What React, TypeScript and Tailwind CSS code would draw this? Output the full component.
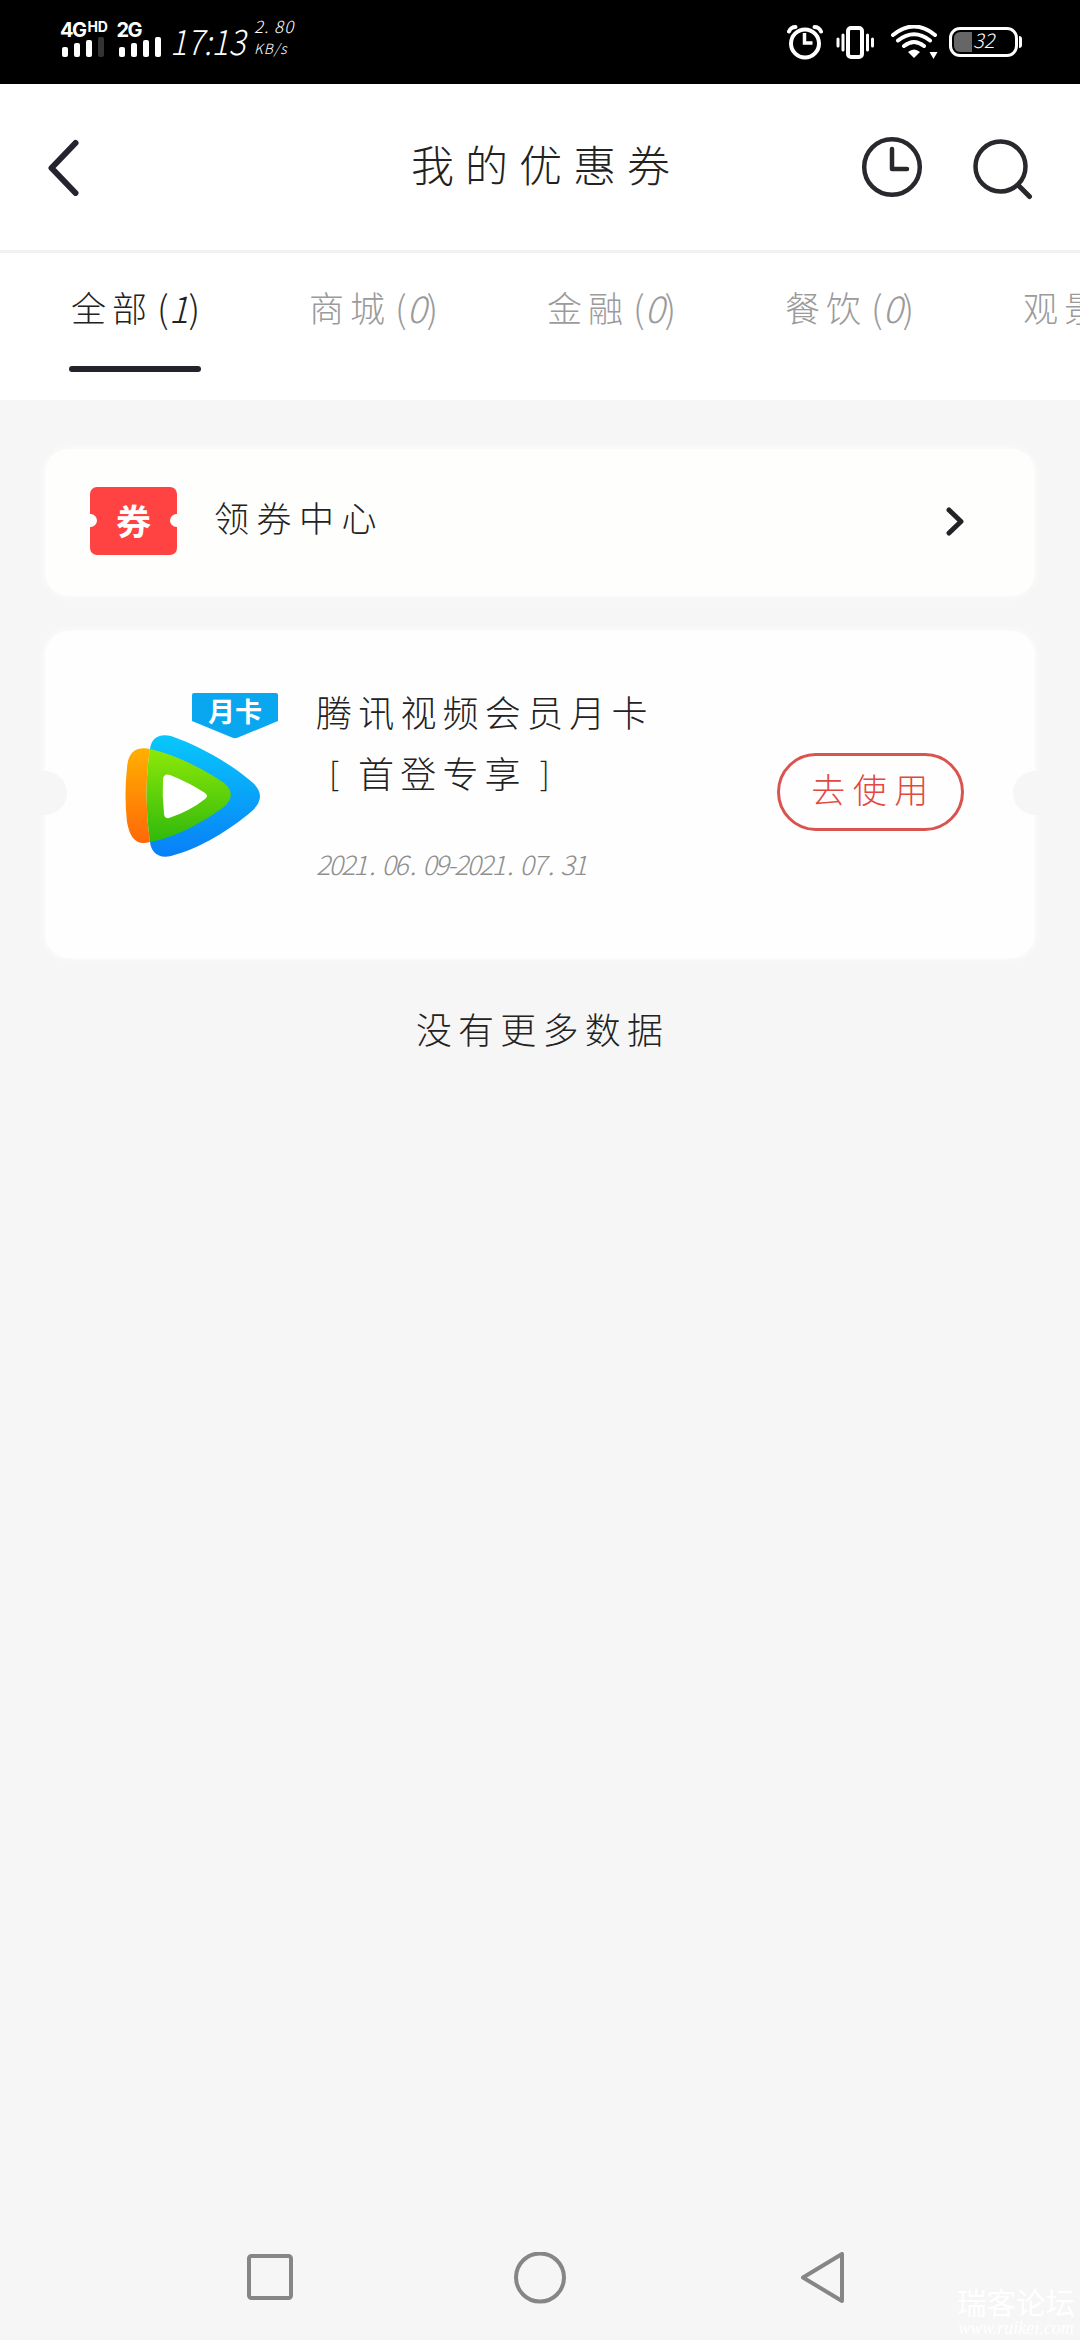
import { Fragment, type ReactNode } from "react";
import clsx from "clsx";

const tabs = [
  { name: "全部", count: 1 },
  { name: "商城", count: 0 },
  { name: "金融", count: 0 },
  { name: "餐饮", count: 0 },
  { name: "观景", count: 0 },
];

function Signal({ label, sup, dim }: { label: string; sup?: string; dim?: boolean }): ReactNode {
  return (
    <div className="w-[56.500px] flex flex-col">
      <div className="h-[20px] -ml-[2px] flex items-start font-['Inter'] font-bold">
        <span className="mt-px text-[20px] leading-[20px] tracking-[-1.5px]">{label}</span>
        {sup && <span className="ml-[2px] text-[14px] leading-[16px] tracking-[-0.3px]">{sup}</span>}
      </div>
      <div className="mt-[-2px] h-[20px] flex items-end gap-[6px]">
        <div className="w-[6px] h-[10px] rounded-xs bg-white" />
        <div className="w-[6px] h-[14px] rounded-xs bg-white" />
        <div className="w-[6px] h-[17px] rounded-xs bg-white" />
        <div className={clsx("w-[6px] h-[20px] rounded-xs", dim ? "bg-[#333]" : "bg-white")} />
      </div>
    </div>
  );
}

function StatusBar(): ReactNode {
  return (
    <div className="h-[84px] bg-black text-white flex items-start pl-[62px]">
      <div className="pt-[19px] flex">
        <Signal label="4G" sup="HD" dim />
        <Signal label="2G" />
      </div>
      <div className="w-[80px] -ml-[5px] pt-[21px] text-[35px] leading-[38px] italic font-light whitespace-nowrap">
        <span className="inline-block origin-left scale-x-[0.9]">17:13</span>
      </div>
      <div className="pt-[17px] pl-[4px] italic font-light">
        <div className="text-[17px] leading-[18px] tracking-[1px]">2. 80</div>
        <div className="mt-[5px] text-[14px] leading-[16px] tracking-[1px]">KB/s</div>
      </div>
      <div className="ml-auto pt-[25px] pr-[58px] flex">
        <svg width="36" height="36" viewBox="0 0 36 36" fill="none" stroke="#fff">
          <circle cx="18" cy="18.500" r="14" strokeWidth="4" />
          <path d="M17.500 8v10h8" strokeWidth="3.500" />
          <path d="M2 6.500Q4 2 8.500 2M34 6.500Q32 2 27.500 2" strokeWidth="4" strokeLinecap="round" />
        </svg>
        <svg className="ml-[13px]" width="40" height="36" viewBox="0 0 40 36" fill="none" stroke="#fff">
          <rect x="12" y="3" width="14" height="29" rx="3" strokeWidth="4" />
          <path d="M7 10v15M31.500 10v15M2 14v7M36.500 14v7" strokeWidth="3" strokeLinecap="round" />
        </svg>
        <svg className="ml-[14px]" width="48" height="36" viewBox="0 0 48 36" fill="none" stroke="#fff" strokeLinecap="round">
          <path d="M3 10Q24-7 45 10M8 15.500Q24 3 40 15.500M14 21Q24 13 34 21" strokeWidth="4" />
          <path d="M18 27q6-5 12 0l-6 6z" fill="#fff" stroke="none" />
          <path d="M39.500 27h8l-4 7z" fill="#fff" stroke="none" />
        </svg>
        <div className="ml-[11px] flex items-start pt-[2px]">
          <div className="w-[69px] h-[30px] rounded-[11px] border-3 border-white flex items-center pl-[2px]">
            <div className="w-[18px] h-[20px] rounded-l-[6px] bg-[#666]" />
            <span className="-mt-[4px] ml-[1px] text-[20px] leading-[20px] font-light italic">32</span>
          </div>
          <div className="ml-px mt-[9px] w-[3px] h-[12px] rounded-r-sm bg-white" />
        </div>
      </div>
    </div>
  );
}

function Header(): ReactNode {
  return (
    <div className="h-[169px] pb-px bg-white border-b-3 border-[#f1f1f1] grid grid-cols-[1fr_auto_1fr] items-center">
      <svg className="ml-[46px]" width="34" height="58" viewBox="0 0 34 58" fill="none" stroke="#24232f" strokeWidth="6" strokeLinecap="round" strokeLinejoin="round">
        <path d="M29.500 5 5.500 30l24 25" />
      </svg>
      <h1 className="-mt-[8px] pl-[12px] text-[43px] leading-[60px] tracking-[11px] font-light">我的优惠券</h1>
      <div className="flex justify-end gap-[48px] pr-[46px]">
        <svg width="64" height="64" viewBox="0 0 64 64" fill="none" stroke="#29282d" strokeWidth="4.500" strokeLinecap="round" strokeLinejoin="round">
          <circle cx="32" cy="33" r="27.800" />
          <path d="M32 15v20h15" />
        </svg>
        <svg width="62" height="66" viewBox="0 -1 62 66" fill="none" stroke="#29282d" strokeWidth="4.500" strokeLinecap="round">
          <circle cx="28.500" cy="31.500" r="25" />
          <path d="m47 51 10.500 10.500" strokeWidth="5" />
        </svg>
      </div>
    </div>
  );
}

function Tabs(): ReactNode {
  return (
    <div className="h-[147px] pl-[69px] pt-[29px] bg-white flex overflow-hidden">
      {tabs.map((tab, i) => (
        <div key={tab.name} className="w-[238px] shrink-0 flex flex-col items-start">
          <div className={clsx("pl-[2px] h-[50px] flex items-center text-[35px] leading-[50px] font-light whitespace-nowrap", i > 0 && "text-[#9b9b9b]")}>
            <span className="tracking-[6px]">{tab.name}</span>
            <span className="ml-[4px] flex text-[37px]">
              (<span className="italic">{tab.count}</span>)
            </span>
          </div>
          {i === 0 && <div className="mt-[34px] w-[132px] h-[6px] rounded-full bg-[#24232b]" />}
        </div>
      ))}
    </div>
  );
}

function CenterEntry(): ReactNode {
  return (
    <div className="mt-[49px] mx-[45px] h-[147px] rounded-[24px] bg-[#fefefd] shadow-[0_0_8px_rgba(255,255,255,0.9)] flex items-center">
      <div className="relative ml-[45px] -mt-[3px] w-[87px] h-[68px] rounded-[7px] bg-[#fe4342] overflow-hidden flex items-center justify-center">
        <span className="-mt-[3px] text-[35px] leading-[40px] font-bold text-white">券</span>
        <div className="absolute -left-[6px] top-[27px] size-[13px] rounded-full bg-[#fefefd]" />
        <div className="absolute -right-[6px] top-[27px] size-[13px] rounded-full bg-[#fefefd]" />
      </div>
      <span className="ml-[37px] -mt-[10px] text-[35px] tracking-[7.500px] font-light">领券中心</span>
      <svg className="ml-auto mr-[69px] -mt-[3px]" width="22" height="32" viewBox="0 0 22 32" fill="none" stroke="#222327" strokeWidth="5" strokeLinecap="round" strokeLinejoin="round">
        <path d="m5 5 12 11.500L5 28" />
      </svg>
    </div>
  );
}

function VideoLogo(): ReactNode {
  return (
    <div className="w-[156px] flex flex-col">
      <div className="self-end relative w-[86px] h-[46px]">
        <svg className="absolute inset-0" width="86" height="46" viewBox="0 0 86 46">
          <path d="M2 0h82q2 0 2 2v26L46 44.500q-3 1.500-6 0L0 28V2q0-2 2-2z" fill="#08a7f0" />
        </svg>
        <span className="relative block text-center text-[27px] leading-[36px] font-bold text-white">月卡</span>
      </div>
      <svg className="-mt-[6px]" width="142" height="128" viewBox="122 733 142 128">
        <defs>
          <linearGradient id="blue" x1="0" y1="0" x2="0" y2="1">
            <stop offset="0" stopColor="#08c8fb" />
            <stop offset="1" stopColor="#087ff8" />
          </linearGradient>
          <linearGradient id="orange" x1="0" y1="0" x2="0" y2="1">
            <stop offset="0" stopColor="#ffb000" />
            <stop offset="1" stopColor="#ff6808" />
          </linearGradient>
          <linearGradient id="green" x1="0" y1="0" x2="0" y2="1">
            <stop offset="0" stopColor="#8ee808" />
            <stop offset="1" stopColor="#2fb90c" />
          </linearGradient>
        </defs>
        <path d="M150 749C151 739 158 733 171 736C200 746 231 764 252 782Q268 796 252 811C231 829 201 848 171 856C158 859 151 852 150 842Q146 795 150 749Z" fill="url(#blue)" />
        <path d="M150 749C135 746 128 753 127 768Q124 795 127 822C130 838 136 846 150 842Q143 795 150 749Z" fill="url(#orange)" />
        <path d="M150 749C174 754 204 769 224 783Q237 794 225 806C204 822 176 837 150 842Q143 795 150 749Z" fill="url(#green)" />
        <path d="M163 779Q164 773 170 775Q190 783 205 793Q209 796 205 799Q190 811 169 818Q164 819 164 813Q162 796 163 779Z" fill="#fff" />
      </svg>
    </div>
  );
}

function DateRange({ value }: { value: string }): ReactNode {
  return (
    <div className="text-[27px] leading-[30px] tracking-[-2px] italic font-light text-[#8f8f8f] whitespace-nowrap">
      {value.split(".").map((part, i) => (
        <Fragment key={i}>
          {i > 0 && <span className="ml-[3px] mr-[8px]">.</span>}
          {part}
        </Fragment>
      ))}
    </div>
  );
}

function CouponCard(): ReactNode {
  return (
    <div className="relative mt-[35px] mx-[45px] h-[327px] rounded-[24px] bg-[#fefefe] shadow-[0_0_8px_rgba(255,255,255,0.9)] flex items-start">
      <div className="absolute -left-[22px] top-[140px] size-[44px] rounded-full bg-[#f6f6f6]" />
      <div className="absolute -right-[22px] top-[140px] size-[44px] rounded-full bg-[#f6f6f6]" />
      <div className="ml-[77px] mt-[62px]">
        <VideoLogo />
      </div>
      <div className="ml-[38px] mt-[50px] text-[36px] leading-[61px] tracking-[6.200px] font-light whitespace-nowrap">
        <div>腾讯视频会员月卡</div>
        <div className="flex">
          <span className="w-[42px] pl-[13px] text-[32px]">[</span>
          首登专享
          <span className="pl-[13px] text-[32px]">]</span>
        </div>
        <div className="mt-[46px]">
          <DateRange value="2021.06.09-2021.07.31" />
        </div>
      </div>
      <button
        type="button"
        className="absolute right-[71px] top-[122px] w-[187px] h-[78px] rounded-full border-3 border-[#d9534f] pl-[6px] pb-[8px] text-[34px] tracking-[7.500px] font-light text-[#e2483f]"
      >
        去使用
      </button>
    </div>
  );
}

function NavBar(): ReactNode {
  return (
    <div className="relative mt-auto h-[126px] flex justify-around px-[135px] pt-[38px]">
      <svg width="50" height="50" viewBox="0 0 50 50" fill="none" stroke="#868686" strokeWidth="4">
        <rect x="4" y="4" width="42" height="42" rx="2.500" />
      </svg>
      <svg width="52" height="52" viewBox="0 -1 52 52" fill="none" stroke="#868686" strokeWidth="4">
        <circle cx="26" cy="24.500" r="24" />
      </svg>
      <svg className="ml-[12px] -mr-[12px]" width="50" height="52" viewBox="0 0 50 52" fill="none" stroke="#868686" strokeWidth="4" strokeLinejoin="round">
        <path d="M45 2v47L6 25.500z" />
      </svg>
      <div className="absolute right-[5px] bottom-[3px] text-white text-center whitespace-nowrap">
        <div className="text-[29.500px] leading-[36px]">瑞客论坛</div>
        <div className="font-['Liberation_Serif'] italic text-[18px] leading-[18px]">www.ruikei.com</div>
      </div>
    </div>
  );
}

export default function App(): ReactNode {
  return (
    <div className="w-[1080px] h-[2340px] overflow-hidden flex flex-col bg-[#f6f6f6] text-[#222] font-['Noto_Sans_CJK_SC',sans-serif]">
      <StatusBar />
      <Header />
      <Tabs />
      <CenterEntry />
      <CouponCard />
      <p className="mt-[45px] pl-[5px] text-center text-[36px] leading-[50px] tracking-[6.200px] font-light">没有更多数据</p>
      <NavBar />
    </div>
  );
}
